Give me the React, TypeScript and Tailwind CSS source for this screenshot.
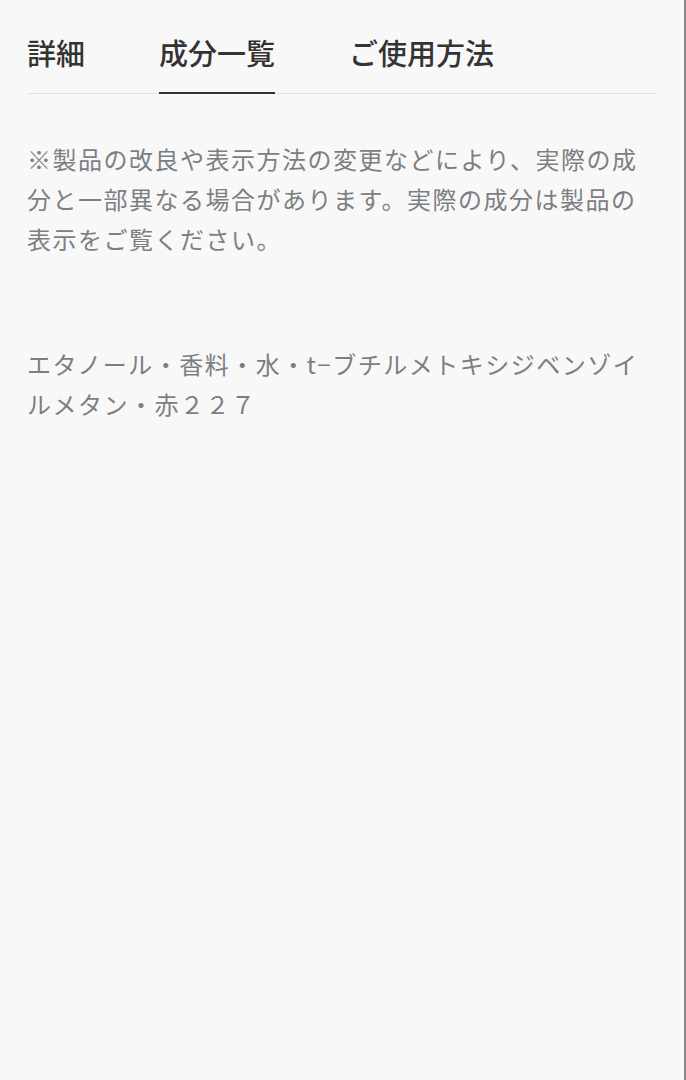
const tabs = ["詳細", "成分一覧", "ご使用方法"]

export default function App() {
  const active = 1
  return (
    <div
      className="min-h-[1080px] w-full bg-[#f8f8f8] border-r-2 border-[#888888]"
      style={{ fontFamily: '"Noto Sans CJK JP", "Noto Sans", sans-serif' }}
    >
      <div className="px-[27px] pt-[30px]">
        <div className="flex gap-[74px] border-b border-[#e2e2e2] mr-[1px]">
          {tabs.map((t, i) => (
            <div
              key={t}
              className={`-mb-px pb-[18px] text-[29px] leading-[44px] font-medium text-[#333333] border-b-2 ${
                i === active ? "border-[#333333]" : "border-transparent"
              }`}
            >
              {t}
            </div>
          ))}
        </div>
        <p className="mt-[45px] text-[24px] leading-[40px] tracking-[1.5px] text-[#7c7f82]">
          ※製品の改良や表示方法の変更などにより、実際の成分と一部異なる場合があります。実際の成分は製品の表示をご覧ください。
        </p>
        <p className="mt-[85px] text-[24px] leading-[40px] tracking-[1.5px] text-[#7c7f82]">
          エタノール・香料・水・t−ブチルメトキシジベンゾイルメタン・赤２２７
        </p>
      </div>
    </div>
  )
}
